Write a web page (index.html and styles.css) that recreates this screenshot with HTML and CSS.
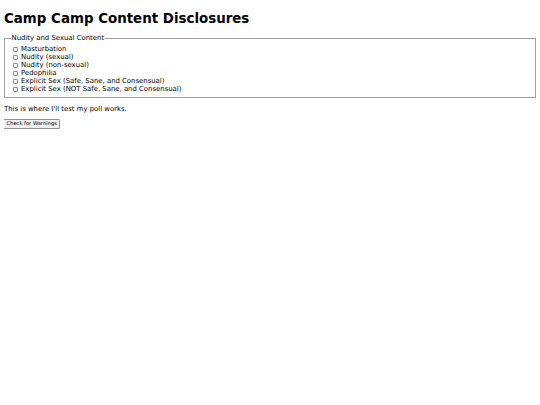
FILE: index.html
```html
<!DOCTYPE html>
<html>
<head>
<meta charset="utf-8">
<link rel="stylesheet" href="styles.css">
</head>
<body>
<h1 class="title">Camp Camp Content Disclosures</h1>
<fieldset class="group">
<legend class="group-legend">Nudity and Sexual Content</legend>
<label class="opt"><input type="checkbox" class="box"> Masturbation</label>
<label class="opt"><input type="checkbox" class="box"> Nudity (sexual)</label>
<label class="opt"><input type="checkbox" class="box"> Nudity (non-sexual)</label>
<label class="opt"><input type="checkbox" class="box"> Pedophilia</label>
<label class="opt"><input type="checkbox" class="box"> Explicit Sex (Safe, Sane, and Consensual)</label>
<label class="opt"><input type="checkbox" class="box"> Explicit Sex (NOT Safe, Sane, and Consensual)</label>
</fieldset>
<p class="note">This is where I'll test my poll works.</p>
<button class="btn">Check for Warnings</button>
</body>
</html>
```
FILE: styles.css
```css
html { background: #fff; }
body {
  margin: 4px;
  font-family: "DejaVu Sans", Verdana, sans-serif;
  font-size: 6.9px;
  color: #000;
}
.title {
  font-size: 13.4px;
  font-weight: bold;
  margin: 7px 0 8px;
}
.group {
  margin: 0;
  padding: 3px 7px 4px;
  border: 1px solid #a0a0a0;
}
.group-legend {
  padding: 0 0.5px;
  margin-left: -1px;
}
.opt {
  display: flex;
  align-items: center;
  height: 8px;
}
.box {
  appearance: none;
  -webkit-appearance: none;
  width: 5px;
  height: 5px;
  margin: 0 3px 0 1px;
  border: 0.6px solid #8a8a8a;
  border-radius: 1px;
  background: #fff;
  box-sizing: border-box;
}
.note { margin: 7px 0 6px; }
.btn {
  display: block;
  font-family: "DejaVu Sans", Verdana, sans-serif;
  font-size: 5.2px;
  height: 9.5px;
  padding: 0 2.5px;
  margin-left: -1px;
  background: #efefef;
  border: 1px solid #909090;
  border-radius: 1px;
  color: #000;
  line-height: 7px;
  box-sizing: border-box;
}
```
